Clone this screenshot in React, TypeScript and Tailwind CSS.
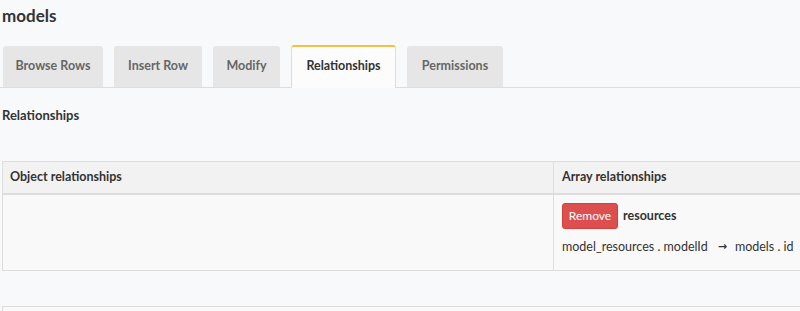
export default function App() {
  const tabs = [
    { label: "Browse Rows", w: "w-[100px]" },
    { label: "Insert Row", w: "w-[88px]" },
    { label: "Modify", w: "w-[67px]" },
    { label: "Relationships", w: "w-[105px]", active: true },
    { label: "Permissions", w: "w-[96px]" },
  ];

  return (
    <div className="min-h-[311px] w-[800px] overflow-hidden bg-[#f8f9fb] font-['Lato',sans-serif] text-[#333]">
      {/* Page title */}
      <div className="pl-[2px] pt-[5px] text-[17px] font-bold leading-[22px]">models</div>

      {/* Tabs */}
      <div className="mt-[18px] flex h-[43px] items-end gap-[11px] border-b border-[#ddd] pl-[3px]">
        {tabs.map((t) =>
          t.active ? (
            <div
              key={t.label}
              className={`${t.w} -mb-px flex h-[43px] items-center justify-center rounded-t-[3px] border-x border-t-2 border-x-[#ddd] border-t-[#f0c14b] bg-[#fcfcfc] pb-[2px] text-[12.5px] font-bold text-[#333]`}
            >
              {t.label}
            </div>
          ) : (
            <div
              key={t.label}
              className={`${t.w} flex h-[41px] items-center justify-center rounded-t-[3px] bg-[#e6e6e6] text-[12.5px] font-bold text-[#666]`}
            >
              {t.label}
            </div>
          )
        )}
      </div>

      {/* Section heading */}
      <div className="pl-[2px] pt-[18px] text-[13px] font-bold leading-[18px]">Relationships</div>

      {/* Relationships table */}
      <div className="ml-[2px] mt-[37px] w-[810px] border border-[#ddd] bg-[#f9f9f9]">
        <div className="flex h-[33px] border-b-2 border-[#ddd] bg-[#f2f2f2] text-[12.5px] font-bold">
          <div className="flex w-[551px] items-center border-r border-[#ddd] pl-[7px]">Object relationships</div>
          <div className="flex flex-1 items-center pl-[8px]">Array relationships</div>
        </div>
        <div className="flex h-[75px]">
          <div className="w-[551px] border-r border-[#ddd]" />
          <div className="flex-1 pl-[8px] pt-[8px]">
            <div className="flex items-center gap-[5px]">
              <button className="h-[26px] w-[56px] rounded-[3px] border border-[#d43f3a] bg-[#dd4f4f] text-[12px] text-white">
                Remove
              </button>
              <span className="text-[12.5px] font-bold">resources</span>
            </div>
            <div className="mt-[9px] flex items-center whitespace-nowrap text-[12.5px] text-[#333]">
              <span>model_resources . modelId</span>
              <span className="ml-[10px] mr-[8px] font-['DejaVu_Sans',sans-serif] text-[11px] font-bold">→</span>
              <span>models . id</span>
            </div>
          </div>
        </div>
      </div>

      {/* Next box */}
      <div className="ml-[2px] mt-[35px] h-[20px] w-[810px] border border-[#ddd] bg-[#f9f9f9]" />
    </div>
  );
}
